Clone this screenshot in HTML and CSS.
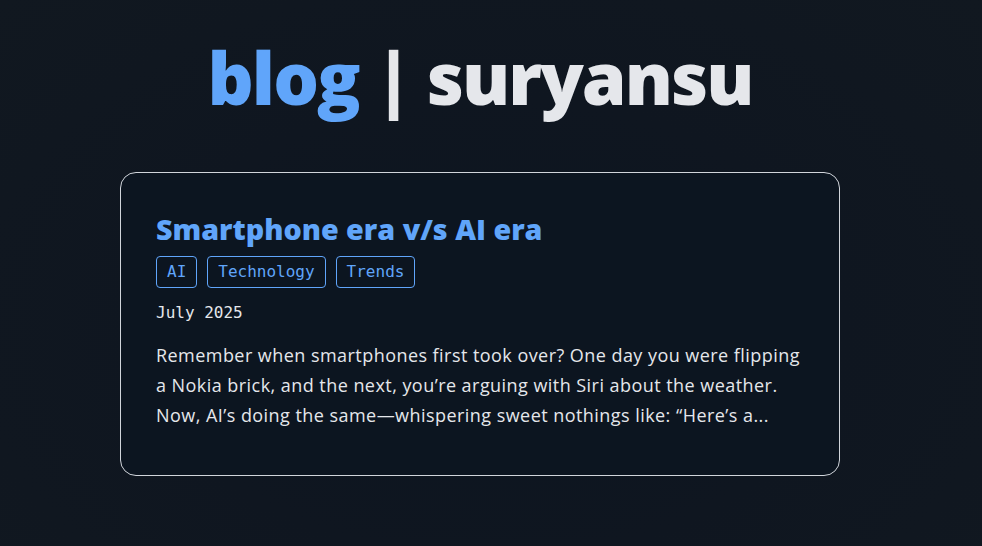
FILE: index.html
```html
<!DOCTYPE html>
<html lang="en">
<head>
<meta charset="utf-8">
<title>blog | suryansu</title>
<link rel="stylesheet" href="styles.css">
</head>
<body>
<div class="page">
  <header class="site-header">
    <h1 class="site-title"><span class="accent">blog</span> | suryansu</h1>
  </header>
  <main class="posts">
    <article class="card">
      <h2 class="post-title">Smartphone era v/s AI era</h2>
      <ul class="tags">
        <li class="tag">AI</li>
        <li class="tag">Technology</li>
        <li class="tag">Trends</li>
      </ul>
      <div class="date">July 2025</div>
      <p class="excerpt">Remember when smartphones first took over? One day you were flipping a Nokia brick, and the next, you’re arguing with Siri about the weather. Now, AI’s doing the same—whispering sweet nothings like: “Here’s a...</p>
    </article>
  </main>
</div>
</body>
</html>
```

FILE: styles.css
```css
html, body {
  margin: 0;
  padding: 0;
}
body {
  background: radial-gradient(ellipse at 50% 60%, #0c1520 0%, #0f1620 50%, #111820 100%);
  min-height: 546px;
  color: #e5e7eb;
  font-family: "Open Sans", "Noto Sans", sans-serif;
}
.page {
  width: 960px;
  display: flex;
  flex-direction: column;
  align-items: center;
}
.site-header {
  padding-top: 27px;
}
.site-title {
  margin: 0;
  font-size: 72px;
  line-height: 100px;
  font-weight: 800;
  letter-spacing: -2px;
  color: #e5e7eb;
}
.accent {
  color: #60a5fa;
}
.posts {
  margin-top: 45px;
  width: 720px;
}
.card {
  border: 1px solid #d1d5db;
  border-radius: 16px;
  background: #0c1520;
  padding: 36px 35px 45px;
}
.post-title {
  margin: 0;
  font-size: 28.7px;
  line-height: 40px;
  font-weight: 800;
  color: #60a5fa;
}
.tags {
  list-style: none;
  margin: 7px 0 0;
  padding: 0;
  display: flex;
  gap: 10px;
}
.tag {
  border: 1px solid #60a5fa;
  border-radius: 4px;
  padding: 4px 10px;
  line-height: 22px;
  font-family: "DejaVu Sans Mono", monospace;
  font-size: 16px;
  color: #60a5fa;
}
.date {
  margin-top: 14px;
  font-family: "DejaVu Sans Mono", monospace;
  font-size: 16px;
  line-height: 22px;
  color: #e5e7eb;
}
.excerpt {
  margin: 16px 0 0;
  font-size: 18px;
  letter-spacing: 0.45px;
  line-height: 30px;
  color: #e5e7eb;
}
```
